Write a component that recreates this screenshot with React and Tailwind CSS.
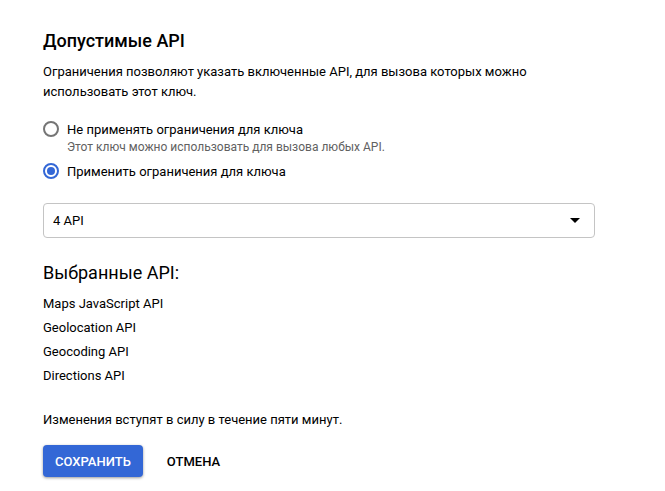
import { useState } from 'react'

const apis = ['Maps JavaScript API', 'Geolocation API', 'Geocoding API', 'Directions API']

const RadioOption = ({ value, label, hint, checked, onChange }) => (
  <div className="flex items-start gap-2">
    <input
      id={value}
      type="radio"
      name="restriction"
      value={value}
      checked={checked}
      onChange={() => onChange(value)}
      className="m-0 h-4 w-4 shrink-0 appearance-none rounded-full border-2 border-[#757575] bg-white bg-clip-content p-0.5 checked:border-[#3367d6] checked:bg-[#3367d6]"
    />
    <div className="text-[13px] leading-[18px]">
      <label htmlFor={value} className="block">{label}</label>
      {hint && <p className="text-xs leading-4 text-[#616161]">{hint}</p>}
    </div>
  </div>
)

const App = () => {
  const [restriction, setRestriction] = useState('restricted')

  return (
    <main className="bg-white pt-[29px] pr-[70px] pb-3 pl-[43px] font-['Roboto',sans-serif] text-[13px] leading-5 text-black">
      <form onSubmit={(e) => e.preventDefault()}>
        <h2 className="text-lg leading-6 font-medium">Допустимые API</h2>
        <p className="mt-[9px] max-w-[500px]">
          Ограничения позволяют указать включенные API, для вызова которых можно использовать этот ключ.
        </p>

        <div className="mt-[19px] flex flex-col gap-2">
          <RadioOption
            value="none"
            label="Не применять ограничения для ключа"
            hint="Этот ключ можно использовать для вызова любых API."
            checked={restriction === 'none'}
            onChange={setRestriction}
          />
          <RadioOption
            value="restricted"
            label="Применить ограничения для ключа"
            checked={restriction === 'restricted'}
            onChange={setRestriction}
          />
        </div>

        {/* Выбор API */}
        <div className="mt-[22px] grid items-center">
          <select
            aria-label="Выберите API"
            className="col-start-1 row-start-1 h-[35px] w-full appearance-none rounded border border-[#c4c4c4] bg-white pr-8 pl-[9px]"
          >
            <option>4 API</option>
          </select>
          <svg viewBox="0 0 10 5" className="pointer-events-none col-start-1 row-start-1 mr-[15px] h-[5px] w-[10px] justify-self-end">
            <path d="M0 0h10L5 5z" fill="#000" />
          </svg>
        </div>

        <h3 className="mt-[23px] text-lg leading-6">Выбранные API:</h3>
        <ul className="mt-[7px] leading-6">
          {apis.map((api) => (
            <li key={api}>{api}</li>
          ))}
        </ul>

        <p className="mt-[22px]">Изменения вступят в силу в течение пяти минут.</p>

        <div className="mt-[15px] flex gap-3 font-medium">
          <button
            type="submit"
            className="h-8 rounded bg-[#3367d6] px-3 pt-0.5 text-white shadow-[0_1px_3px_rgba(0,0,0,0.4)]"
          >
            СОХРАНИТЬ
          </button>
          <button type="button" className="h-8 px-3 pt-0.5">
            ОТМЕНА
          </button>
        </div>
      </form>
    </main>
  )
}

export default App
